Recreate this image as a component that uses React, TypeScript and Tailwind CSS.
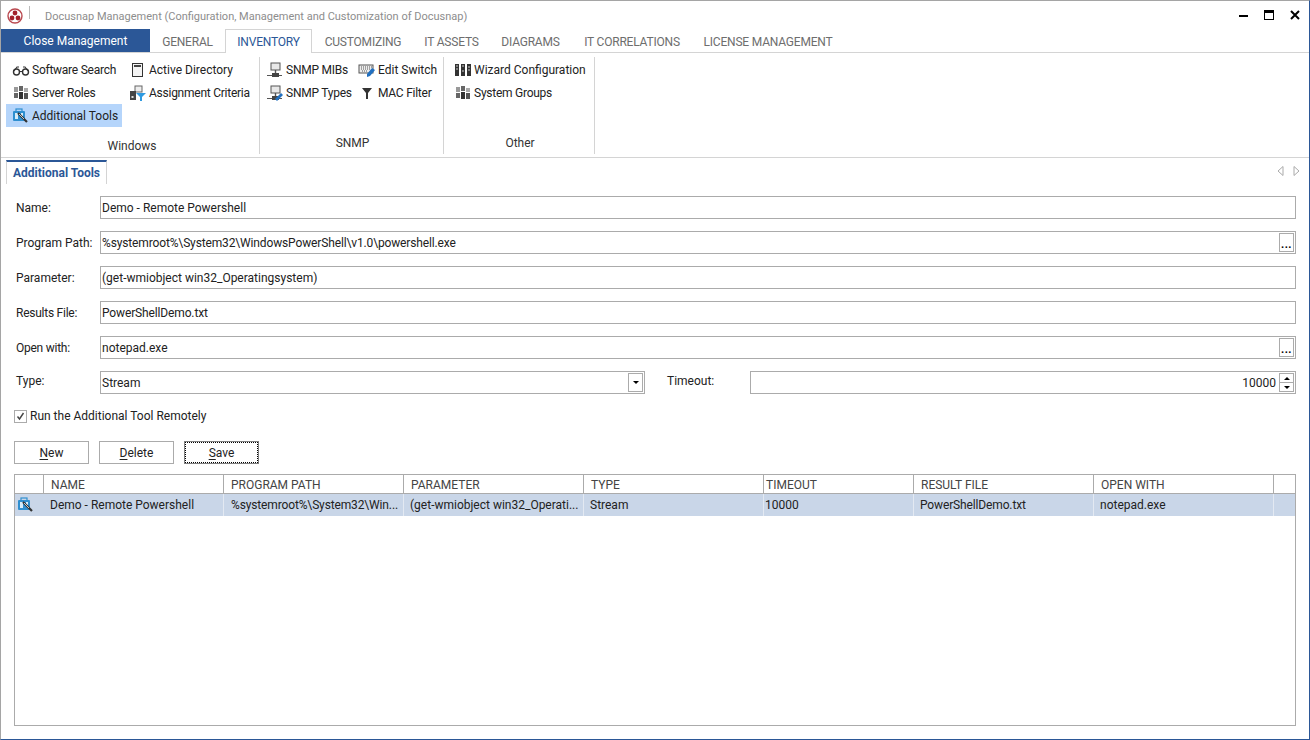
import React from 'react';

const tabs = [
  { name: 'GENERAL', w: 'w-[75px]' },
  { name: 'INVENTORY', w: 'w-[87px]' },
  { name: 'CUSTOMIZING', w: 'w-[102px]' },
  { name: 'IT ASSETS', w: 'w-[75px]' },
  { name: 'DIAGRAMS', w: 'w-[83px]' },
  { name: 'IT CORRELATIONS', w: 'w-[120px]' },
  { name: 'LICENSE MANAGEMENT', w: 'w-[152px]' },
];

const Ico: React.FC<{ children: React.ReactNode }> = ({ children }) => (
  <svg width="18" height="16" viewBox="0 0 18 16" className="shrink-0">
    {children}
  </svg>
);

const GlassesIcon = () => (
  <Ico>
    <circle cx="4.5" cy="10" r="3" fill="none" stroke="#333" strokeWidth="1.4" />
    <circle cx="13.5" cy="10" r="3" fill="none" stroke="#333" strokeWidth="1.4" />
    <path d="M7.5 9.5h3M2 9l3-4h2M16 9l-3-4h-2" fill="none" stroke="#333" strokeWidth="1.1" />
  </Ico>
);

const RolesIcon = () => (
  <Ico>
    <rect x="2" y="2" width="4" height="5" fill="#999" />
    <rect x="7" y="1" width="4" height="5" fill="#666" />
    <rect x="12" y="3" width="4" height="4" fill="#aaa" />
    <rect x="2" y="8" width="4" height="5" fill="#666" />
    <rect x="7" y="7" width="4" height="7" fill="#333" />
    <rect x="12" y="8" width="4" height="6" fill="#555" />
  </Ico>
);

const ToolsIcon = () => (
  <Ico>
    <rect x="1" y="3" width="12" height="10" rx="1" fill="#2f8fd0" />
    <rect x="4" y="1" width="6" height="3" fill="none" stroke="#2f8fd0" strokeWidth="1.2" />
    <rect x="3" y="5" width="3" height="6" fill="#d7ecf9" />
    <rect x="9" y="5" width="2" height="3" fill="#d7ecf9" />
    <path d="M6 5l9 9" stroke="#333" strokeWidth="2.2" />
    <path d="M7 6l5 5" stroke="#eee" strokeWidth="0.8" />
  </Ico>
);

const DirectoryIcon = () => (
  <Ico>
    <rect x="3.5" y="1.5" width="10" height="13" fill="#f4f4f4" stroke="#333" />
    <rect x="5" y="3" width="7" height="2" fill="#444" />
  </Ico>
);

const CriteriaIcon = () => (
  <Ico>
    <rect x="6" y="1" width="7" height="6" fill="#eee" stroke="#666" />
    <rect x="1" y="6" width="6" height="9" fill="#444" />
    <rect x="2.5" y="11" width="2" height="2" fill="#ddd" />
    <path d="M7 8h10l-4 4v4h-2v-4z" fill="#2f9ae0" />
  </Ico>
);

const MonitorNet = ({ pen }: { pen?: boolean }) => (
  <Ico>
    <rect x="5" y="1" width="9" height="7" fill="#e8e8e8" stroke="#555" />
    <path d="M9.5 8v3" stroke="#555" strokeWidth="1.4" />
    <path d="M1 13.5h15" stroke="#555" />
    <rect x="6" y="11" width="7" height="4" fill="#444" />
    {pen && <path d="M9 14l6-6 2 2-6 6z" fill="#2270c0" />}
  </Ico>
);

const KeyboardIcon = () => (
  <Ico>
    <rect x="1" y="3" width="14" height="8" fill="#eee" stroke="#555" />
    <path d="M3 5h11M3 7h9M4 9h6" stroke="#555" strokeDasharray="1 1" />
    <path d="M9 12l5-6 3 2-5 6-3 1z" fill="#2270c0" />
  </Ico>
);

const FunnelIcon = () => (
  <Ico>
    <path d="M4 3h10l-4 5v6H8V8z" fill="#333" />
  </Ico>
);

const WizardIcon = () => (
  <Ico>
    <rect x="1" y="2" width="4" height="12" fill="#333" />
    <rect x="7" y="2" width="4" height="12" fill="#333" />
    <rect x="13" y="2" width="4" height="12" fill="#333" />
    <path d="M2 4h2M2 7h2M8 4h2M8 9h2M14 5h2M14 8h2" stroke="#ccc" />
  </Ico>
);

const RibbonItem: React.FC<{ icon: React.ReactNode; label: string; active?: boolean; tight?: boolean; className?: string }> = ({
  icon,
  label,
  active,
  tight,
  className,
}) => (
  <div className={`flex h-[23px] items-center gap-[1px] pl-[6px] pr-1 ${active ? 'bg-[#b5d5fb]' : ''} ${className ?? ''}`}>
    {icon}
    <span className={`ml-[1px] whitespace-nowrap text-[#222] ${tight ? 'tracking-[-0.25px]' : ''}`}>{label}</span>
  </div>
);

const Group: React.FC<{ width: string; label: string; labelClass: string; children: React.ReactNode }> = ({
  width,
  label,
  labelClass,
  children,
}) => (
  <div className={`relative flex h-[97px] shrink-0 flex-col border-r border-[#d4d4d4] ${width}`}>
    <div className="flex flex-1 pt-[1px]">{children}</div>
    <div className={`text-center text-[#333] ${labelClass}`}>{label}</div>
  </div>
);

const Field: React.FC<{ label: string; value: string; browse?: boolean; tightLabel?: boolean; tightValue?: boolean }> = ({
  label,
  value,
  browse,
  tightLabel,
  tightValue,
}) => (
  <div className="flex h-[23px] items-center">
    <div className={`w-[86px] shrink-0 pl-[2px] text-[#222] ${tightLabel ? 'tracking-[-0.25px]' : ''}`}>{label}</div>
    <div className="flex h-[23px] flex-1 items-center border border-[#ababab] pl-[1px] text-[#222]">
      <span className={`flex-1 whitespace-nowrap ${tightValue ? 'tracking-[-0.14px]' : ''}`}>{value}</span>
      {browse && (
        <div className="mr-[1px] flex h-[19px] w-[15px] items-end justify-center border border-[#ababab] pb-[1px] text-[11px] leading-[10px] font-bold tracking-[0.5px] text-black">
          ...
        </div>
      )}
    </div>
  </div>
);

const Btn: React.FC<{ first: string; rest: string; focus?: boolean }> = ({ first, rest, focus }) => (
  <div
    className={`flex h-[23px] w-[75px] items-center justify-center border text-[#222] ${focus ? 'border-[#808080] outline-1 -outline-offset-2 outline-dotted outline-black' : 'border-[#ababab]'}`}
  >
    <span className="underline decoration-[#222] underline-offset-2 [text-decoration-skip-ink:none]">{first}</span>
    <span>{rest}</span>
  </div>
);

const columns = [
  { text: 'NAME', pad: 'pl-[7px]' },
  { text: 'PROGRAM PATH', pad: 'pl-[7px]' },
  { text: 'PARAMETER', pad: 'pl-[7px]' },
  { text: 'TYPE', pad: 'pl-[7px]' },
  { text: 'TIMEOUT', pad: 'pl-[2px]' },
  { text: 'RESULT FILE', pad: 'pl-[7px]' },
  { text: 'OPEN WITH', pad: 'pl-[7px]' },
];
const values = [
  { text: 'Demo - Remote Powershell', pad: 'pl-[6px]' },
  { text: '%systemroot%\\System32\\Win...', pad: 'pl-[7px] tracking-[-0.14px]' },
  { text: '(get-wmiobject win32_Operati...', pad: 'pl-[6px]' },
  { text: 'Stream', pad: 'pl-[6px]' },
  { text: '10000', pad: 'pl-[1px]' },
  { text: 'PowerShellDemo.txt', pad: 'pl-[6px] tracking-[-0.14px]' },
  { text: 'notepad.exe', pad: 'pl-[6px]' },
];
const gridCols = 'grid grid-cols-[29px_180px_180px_180px_180px_150px_180px_180px_1fr]';

export default function App() {
  return (
    <div
      className="flex h-[740px] w-[1310px] flex-col overflow-hidden border border-t-[#a5a5a5] border-r-[#2b5797] border-b-[#2b5797] border-l-[#a5a5a5] bg-white text-[12px] leading-[16px]"
      style={{ fontFamily: 'Roboto, "Liberation Sans", sans-serif' }}
    >
      {/* title bar */}
      <div className="flex h-[28px] shrink-0 items-center">
        <svg width="16" height="16" viewBox="0 0 16 16" className="ml-[6px] mt-[1px]">
          <circle cx="8" cy="8" r="7" fill="#fff" stroke="#b9484f" strokeWidth="1.4" />
          <circle cx="8" cy="5" r="2.4" fill="#a3222b" />
          <circle cx="5" cy="10" r="2.4" fill="#a3222b" />
          <circle cx="11" cy="10" r="2.4" fill="#a3222b" />
        </svg>
        <div className="ml-[6px] mb-[6px] h-[13px] w-px bg-[#bbb]" />
        <div className="ml-[15px] mt-[3px] text-[11px] text-[#8d8d8d]">Docusnap Management (Configuration, Management and Customization of Docusnap)</div>
        <div className="ml-auto flex items-center">
          <div className="mt-[2px] h-[2px] w-[9px] bg-black" />
          <div className="ml-[16px] h-[10px] w-[10px] border border-t-[3px] border-black" />
          <svg width="10" height="10" viewBox="0 0 10 10" className="ml-[16px] mr-[9px]">
            <path d="M1 1l8 8M9 1l-8 8" stroke="#000" strokeWidth="2" />
          </svg>
        </div>
      </div>

      {/* tabs */}
      <div className="relative flex h-[24px] shrink-0 border-b border-[#d4d4d4]">
        <div className="flex h-[23px] w-[149px] items-center justify-center bg-[#2b5797] pt-[1px] text-white">Close Management</div>
        <div className="flex">
          {tabs.map((t) => (
            <div
              key={t.name}
              className={`flex h-[24px] items-center justify-center pt-[1px] tracking-[-0.2px] whitespace-nowrap ${t.w} ${
                t.name === 'INVENTORY'
                  ? 'border-x border-t border-[#d4d4d4] bg-white text-[#2b5797]'
                  : 'text-[#6e6e6e]'
              }`}
            >
              {t.name}
            </div>
          ))}
        </div>
      </div>

      {/* ribbon */}
      <div className="flex h-[105px] shrink-0 border-b border-[#d4d4d4] pt-[4px]">
        <Group width="w-[259px]" label="Windows" labelClass="pl-[4px]">
          <div className="flex w-[122px] flex-col pl-[5px]">
            <RibbonItem icon={<GlassesIcon />} label="Software Search" tight />
            <RibbonItem icon={<RolesIcon />} label="Server Roles" tight />
            <RibbonItem icon={<ToolsIcon />} label="Additional Tools" active className="w-[116px]" />
          </div>
          <div className="flex flex-col">
            <RibbonItem icon={<DirectoryIcon />} label="Active Directory" />
            <RibbonItem icon={<CriteriaIcon />} label="Assignment Criteria" tight />
          </div>
        </Group>
        <Group width="w-[184px]" label="SNMP" labelClass="pl-[2px] pb-[3px]">
          <div className="flex w-[92px] flex-col">
            <RibbonItem icon={<MonitorNet />} label="SNMP MIBs" tight />
            <RibbonItem icon={<MonitorNet pen />} label="SNMP Types" tight />
          </div>
          <div className="flex flex-col">
            <RibbonItem icon={<KeyboardIcon />} label="Edit Switch" />
            <RibbonItem icon={<FunnelIcon />} label="MAC Filter" tight />
          </div>
        </Group>
        <Group width="w-[151px]" label="Other" labelClass="pl-[2px] pb-[3px]">
          <div className="flex flex-col pl-[4px]">
            <RibbonItem icon={<WizardIcon />} label="Wizard Configuration" />
            <RibbonItem icon={<RolesIcon />} label="System Groups" tight />
          </div>
        </Group>
      </div>

      {/* document tab */}
      <div className="flex h-[26px] shrink-0 pt-[2px]">
        <div className="ml-[5px] flex h-[24px] w-[101px] items-center justify-center border-r border-t-2 border-l border-r-[#d4d4d4] border-t-[#2b5797] border-l-[#d4d4d4] font-bold text-[#2b5797]">
          Additional Tools
        </div>
        <div className="ml-auto mr-[9px] mt-[6px] flex gap-[9px]">
          <svg width="7" height="10" viewBox="0 0 7 10">
            <path d="M6 .5v9L1 5z" fill="none" stroke="#aaa" />
          </svg>
          <svg width="7" height="10" viewBox="0 0 7 10">
            <path d="M1 .5v9L6 5z" fill="none" stroke="#aaa" />
          </svg>
        </div>
      </div>

      {/* form */}
      <div className="flex flex-1 flex-col px-[13px] pt-[12px] pb-[13px]">
        <div className="flex flex-col gap-[12px]">
          <Field label="Name:" value="Demo - Remote Powershell" />
          <Field label="Program Path:" value="%systemroot%\System32\WindowsPowerShell\v1.0\powershell.exe" browse tightValue />
          <Field label="Parameter:" value="(get-wmiobject win32_Operatingsystem)" />
          <Field label="Results File:" value="PowerShellDemo.txt" tightLabel tightValue />
          <Field label="Open with:" value="notepad.exe" browse tightLabel />
          <div className="flex h-[23px] items-center">
            <div className="mb-[4px] w-[86px] shrink-0 pl-[2px] text-[#222]">Type:</div>
            <div className="flex h-[23px] w-[545px] items-center border border-[#ababab] pl-[1px] text-[#222]">
              <span className="flex-1">Stream</span>
              <div className="mr-[1px] flex h-[19px] w-[15px] items-center justify-center border border-[#ababab]">
                <div className="h-0 w-0 border-x-[3px] border-t-[3px] border-x-transparent border-t-black" />
              </div>
            </div>
            <div className="mb-[4px] ml-[22px] w-[83px] shrink-0 text-[#222]">Timeout:</div>
            <div className="flex h-[23px] flex-1 items-center justify-end border border-[#ababab] text-[#222]">
              <span className="mr-[3px]">10000</span>
              <div className="mr-[1px] flex h-[19px] w-[15px] flex-col border border-[#ababab]">
                <div className="flex flex-1 items-center justify-center border-b border-[#ababab]">
                  <div className="h-0 w-0 border-x-[3px] border-b-[3px] border-x-transparent border-b-black" />
                </div>
                <div className="flex flex-1 items-center justify-center">
                  <div className="h-0 w-0 border-x-[3px] border-t-[3px] border-x-transparent border-t-black" />
                </div>
              </div>
            </div>
          </div>
        </div>

        <div className="mt-[15px] flex h-[14px] items-center gap-[3px]">
          <div className="flex h-[13px] w-[13px] items-center justify-center border border-[#ababab]">
            <svg width="9" height="9" viewBox="0 0 9 9">
              <path d="M1.5 4.5l2 2.5 4-6" fill="none" stroke="#444" strokeWidth="1.4" />
            </svg>
          </div>
          <span className="text-[#222]">Run the Additional Tool Remotely</span>
        </div>

        <div className="mt-[18px] flex gap-[10px]">
          <Btn first="N" rest="ew" />
          <Btn first="D" rest="elete" />
          <Btn first="S" rest="ave" focus />
        </div>

        {/* table */}
        <div className="mt-[10px] flex-1 border border-[#ababab]">
          <div className={`${gridCols} h-[19px] border-b border-[#ababab]`}>
            <div className="border-r border-[#ababab]" />
            {columns.map((c) => (
              <div key={c.text} className={`flex items-center border-r border-[#ababab] pt-[1px] text-[#444] ${c.pad}`}>
                {c.text}
              </div>
            ))}
            <div />
          </div>
          <div className={`${gridCols} h-[22px] bg-[#c9d6e8]`}>
            <div className="flex items-center pl-[2px]">
              <ToolsIcon />
            </div>
            {values.map((v) => (
              <div key={v.text} className={`flex items-center border-r border-[#e3e9f2] whitespace-nowrap text-[#222] ${v.pad}`}>
                {v.text}
              </div>
            ))}
            <div />
          </div>
        </div>
      </div>
    </div>
  );
}
